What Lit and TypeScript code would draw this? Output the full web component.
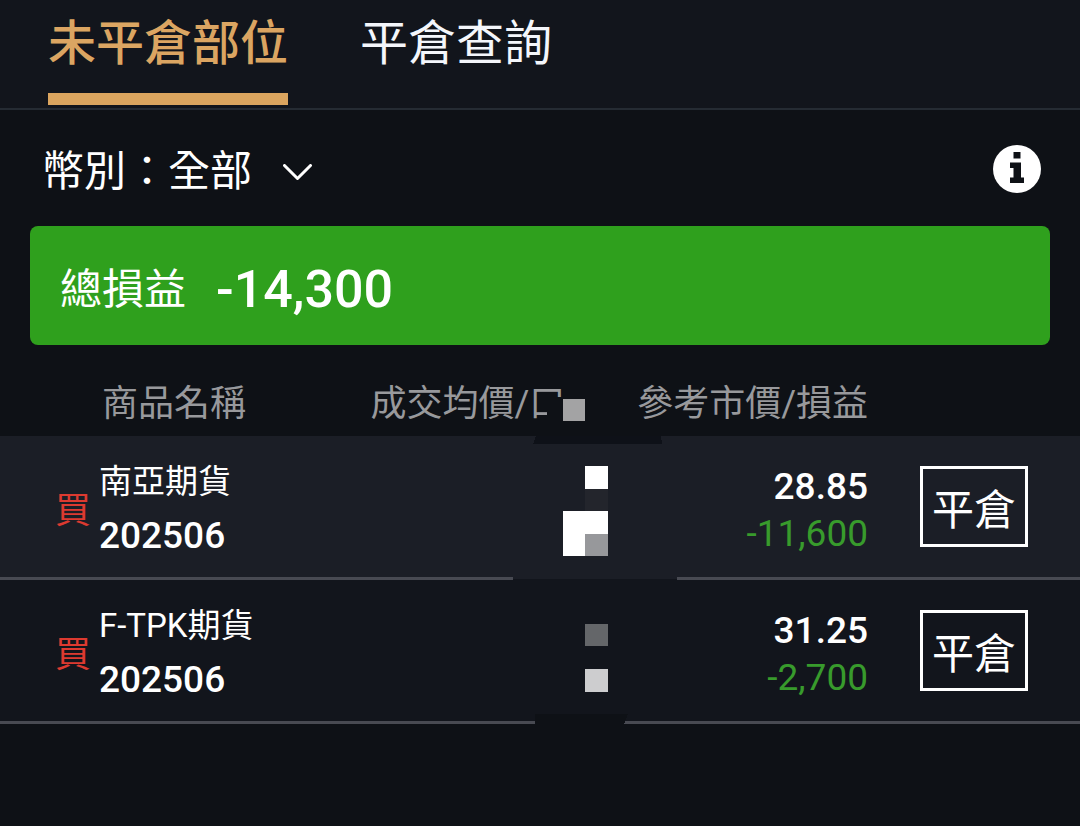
import { LitElement, html, css, svg } from "lit";
import { customElement, property, state } from "lit/decorators.js";

interface Position {
  side: string;
  name: string;
  month: string;
  price: string;
  profit: string;
}

const POSITIONS: Position[] = [
  { side: "買", name: "南亞期貨", month: "202506", price: "28.85", profit: "-11,600" },
  { side: "買", name: "F-TPK期貨", month: "202506", price: "31.25", profit: "-2,700" },
];

// Mosaic blocks that hide the average price and lot values.
const BLOCKS = [
  { x: 47, y: 27, w: 54, h: 26, fill: "#0e1116" },
  { x: 63, y: 29, w: 22, h: 22, fill: "#a3a3a4" },
  { x: 85, y: 96, w: 23, h: 23, fill: "#ffffff" },
  { x: 85, y: 119, w: 23, h: 22, fill: "#23252c" },
  { x: 63, y: 141, w: 45, h: 45, fill: "#ffffff" },
  { x: 85, y: 164, w: 23, h: 22, fill: "#97989b" },
  { x: 13, y: 206, w: 164, h: 3, fill: "#1b1e26" },
  { x: 13, y: 209, w: 164, h: 2, fill: "#12151c" },
  { x: 85, y: 254, w: 23, h: 22, fill: "#646669" },
  { x: 85, y: 299, w: 23, h: 23, fill: "#cdcdcf" },
];

@customElement("position-tabs")
class PositionTabs extends LitElement {
  @state() private active = 0;

  static styles = css`
    :host { display: block; background: #12151c; border-bottom: 2px solid #252b33; }
    .tabs { display: flex; gap: 72px; padding: 0 48px 3px; }
    .tab {
      appearance: none; background: none; border: 0; margin: 0; padding: 8px 0 13px;
      border-bottom: 12px solid transparent; color: #f4f6fb;
      font: 400 48px/72px Roboto, "Noto Sans CJK TC", sans-serif; cursor: pointer;
    }
    .tab.active { color: #dba562; border-bottom-color: #dba55f; font-weight: 500; }
  `;

  render() {
    return html`<div class="tabs" role="tablist">
      ${["未平倉部位", "平倉查詢"].map(
        (label, i) => html`<button
          class="tab ${i === this.active ? "active" : ""}"
          role="tab"
          aria-selected=${i === this.active}
          @click=${() => (this.active = i)}
        >${label}</button>`
      )}
    </div>`;
  }
}

@customElement("position-table")
class PositionTable extends LitElement {
  @property({ attribute: false }) rows: Position[] = [];

  static styles = css`
    :host { display: block; }
    .table { width: 100%; border-collapse: separate; border-spacing: 0; table-layout: fixed; }
    .col-side { width: 99px; }
    .col-avg { width: 22%; }
    .col-ref { width: 25%; }
    .col-action { width: 212px; }
    th { box-sizing: border-box; height: 66px; padding: 2px 0 0; font-weight: 400; font-size: 36px; line-height: 52px; color: #98999c; text-align: left; white-space: nowrap; }
    .head-name { padding-left: 3px; }
    .head-avg { position: relative; z-index: 1; padding-left: 10px; }
    .right { text-align: right; }
    .mosaic { position: absolute; left: 140px; top: 0; width: 200px; height: 360px; pointer-events: none; }
    td { box-sizing: border-box; height: 144px; padding: 0; border-bottom: 3px solid #484a52; vertical-align: middle; background: #12151c; color: #fff; }
    tr:nth-child(odd) td { background: #1b1e26; }
    .side { padding: 8px 8px 0 0; text-align: right; font-size: 36px; line-height: 48px; color: #dd3a30; }
    .contract { padding-top: 4px; }
    .name { font-size: 33px; line-height: 54px; font-weight: 400; white-space: nowrap; }
    .month { font-size: 37px; line-height: 54px; font-weight: 500; }
    .value { padding-top: 6px; text-align: right; }
    .price { font-size: 37px; line-height: 47px; font-weight: 500; }
    .profit { font-size: 37px; line-height: 47px; font-weight: 400; color: #389b2c; }
    .action { padding-left: 52px; }
    .close {
      display: block; width: 108px; height: 81px; padding: 8px 0 0; border: 3px solid #fff; border-radius: 0;
      background: none; color: #fff; font: 400 42px/60px Roboto, "Noto Sans CJK TC", sans-serif; cursor: pointer;
    }
  `;

  render() {
    return html`<table class="table">
      <colgroup>
        <col class="col-side" /><col /><col class="col-avg" /><col class="col-ref" /><col class="col-action" />
      </colgroup>
      <thead>
        <tr>
          <th></th>
          <th class="head-name" scope="col">商品名稱</th>
          <th class="head-avg" scope="col">成交均價/口${this.mosaic()}</th>
          <th class="right" scope="col">參考市價/損益</th>
          <th></th>
        </tr>
      </thead>
      <tbody>
        ${this.rows.map(
          (r) => html`<tr>
            <td class="side">${r.side}</td>
            <td class="contract"><div class="name">${r.name}</div><div class="month">${r.month}</div></td>
            <td></td>
            <td class="value"><div class="price">${r.price}</div><div class="profit">${r.profit}</div></td>
            <td class="action"><button class="close">平倉</button></td>
          </tr>`
        )}
      </tbody>
    </table>`;
  }

  private mosaic() {
    return html`<svg class="mosaic" viewBox="0 0 200 360" shape-rendering="crispEdges" aria-hidden="true">
      ${BLOCKS.map((b) => svg`<rect x=${b.x} y=${b.y} width=${b.w} height=${b.h} fill=${b.fill}></rect>`)}
      <path d="M36 66H161L162 74H33Z" fill="#0e1118" />
      <path d="M35 344H128L124 354H35Z" fill="#0e1116" />
    </svg>`;
  }
}

@customElement("app-root")
class AppRoot extends LitElement {
  static styles = css`
    :host {
      display: block; min-height: 100vh; background: #0e1116; color: #fff;
      font-family: Roboto, "Noto Sans CJK TC", sans-serif;
    }
    .filter { display: flex; align-items: center; justify-content: space-between; padding: 30px 39px 22px 42px; }
    .currency { display: flex; align-items: center; font-size: 42px; line-height: 64px; }
    .picker { display: grid; align-items: center; }
    .select {
      grid-area: 1 / 1; appearance: none; background: none; border: 0; margin: 0; padding: 0 60px 0 0;
      color: #fff; font: inherit; height: 64px; cursor: pointer;
    }
    .chevron { grid-area: 1 / 1; justify-self: end; width: 30px; height: 16px; pointer-events: none; }
    .info { display: block; padding: 0; border: 0; background: none; width: 48px; height: 48px; margin-bottom: 6px; cursor: pointer; }
    .info-icon { display: block; width: 48px; height: 48px; }
    .total {
      box-sizing: border-box; display: flex; align-items: center; gap: 30px; margin: 0 30px 25px; padding: 8px 30px 0;
      height: 119px; border-radius: 8px; background: #2fa01d;
    }
    .total-label { font-size: 42px; line-height: 64px; }
    .total-value { font-size: 52px; line-height: 64px; font-weight: 500; }
  `;

  render() {
    return html`
      <position-tabs></position-tabs>
      <main>
        <div class="filter">
          <div class="currency">
            <label for="currency">幣別：</label>
            <span class="picker">
              <select class="select" id="currency"><option>全部</option></select>
              <svg class="chevron" viewBox="0 0 30 16" aria-hidden="true">
                <path d="M1.5 1.5 14.5 14.5 27.5 1.5" fill="none" stroke="#fff" stroke-width="3" stroke-linecap="round" stroke-linejoin="round" />
              </svg>
            </span>
          </div>
          <button class="info" aria-label="說明">
            <svg class="info-icon" viewBox="0 0 48 48" aria-hidden="true">
              <circle cx="24" cy="24" r="24" fill="#fff" />
              <path d="M20.5 7H27.5V13.5H20.5ZM17 17.5H28V32.5H31V38H17V32.5H20.5V23H17Z" fill="#0e1116" />
            </svg>
          </button>
        </div>
        <section class="total">
          <span class="total-label">總損益</span>
          <strong class="total-value">-14,300</strong>
        </section>
        <position-table .rows=${POSITIONS}></position-table>
      </main>
    `;
  }
}
